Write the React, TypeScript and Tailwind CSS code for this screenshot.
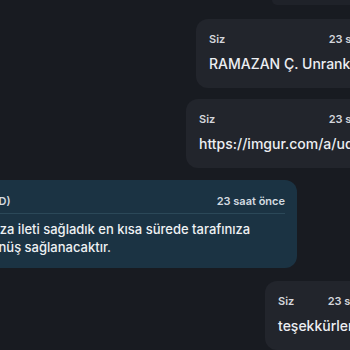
import React from 'react';

type Msg = { id: number; mine: boolean; author: string; time: string; lines: string[] };

const MESSAGES: Msg[] = [
  { id: 1, mine: true, author: 'Siz', time: '23 saat önce', lines: ['RAMAZAN Ç. Unranked hesap'] },
  { id: 2, mine: true, author: 'Siz', time: '23 saat önce', lines: ['https://imgur.com/a/uqX2k'] },
  {
    id: 3,
    mine: false,
    author: 'Satıcı (SD)',
    time: '23 saat önce',
    lines: ['Sorunuza ileti sağladık en kısa sürede tarafınıza', 'geri dönüş sağlanacaktır.'],
  },
  { id: 4, mine: true, author: 'Siz', time: '23 saat önce', lines: ['teşekkürler'] },
];

const mineLayout: Record<number, string> = {
  1: 'mt-[14px] ml-[196px] w-[214px]',
  2: 'mt-[11px] ml-[186px] w-[224px]',
  4: 'mt-[13px] ml-[265px] w-[144px]',
};

const Bubble: React.FC<{ msg: Msg }> = ({ msg }) => {
  if (msg.mine) {
    return (
      <div className={`${mineLayout[msg.id]} shrink-0 rounded-xl bg-[#22252c] px-[13px] pt-[13px] pb-[14px]`}>
        <div className="flex items-center justify-between text-[11px] font-semibold leading-[14px] text-[#d4d6dc]">
          <span>{msg.author}</span>
          <span>{msg.time}</span>
        </div>
        <div className="mt-[8px] whitespace-nowrap text-[14px] font-medium leading-[20px] text-[#eceef2]">
          {msg.lines[0]}
        </div>
      </div>
    );
  }
  return (
    <div className="mt-[12px] ml-[-57px] w-[354px] shrink-0 rounded-xl bg-[#1b3343] px-[12px] pt-[14px] pb-[12px]">
      <div className="flex items-center justify-between border-b border-[#2b4858] pb-[5px] text-[11px] font-semibold leading-[14px] text-[#d4dbe0]">
        <span>{msg.author}</span>
        <span>{msg.time}</span>
      </div>
      <div className="mt-[6px] whitespace-nowrap text-[13px] font-medium leading-[18px] text-[#eef1f3]">
        {msg.lines.map((l) => (
          <div key={l}>{l}</div>
        ))}
      </div>
    </div>
  );
};

export default function App() {
  return (
    <div className="flex h-[350px] w-[350px] flex-col overflow-hidden bg-[#181b21] font-['Inter',sans-serif]">
      <div className="ml-[272px] h-[5px] w-[200px] shrink-0 rounded-bl-[10px] bg-[#1f2229]" />
      {MESSAGES.map((m) => (
        <Bubble key={m.id} msg={m} />
      ))}
    </div>
  );
}
